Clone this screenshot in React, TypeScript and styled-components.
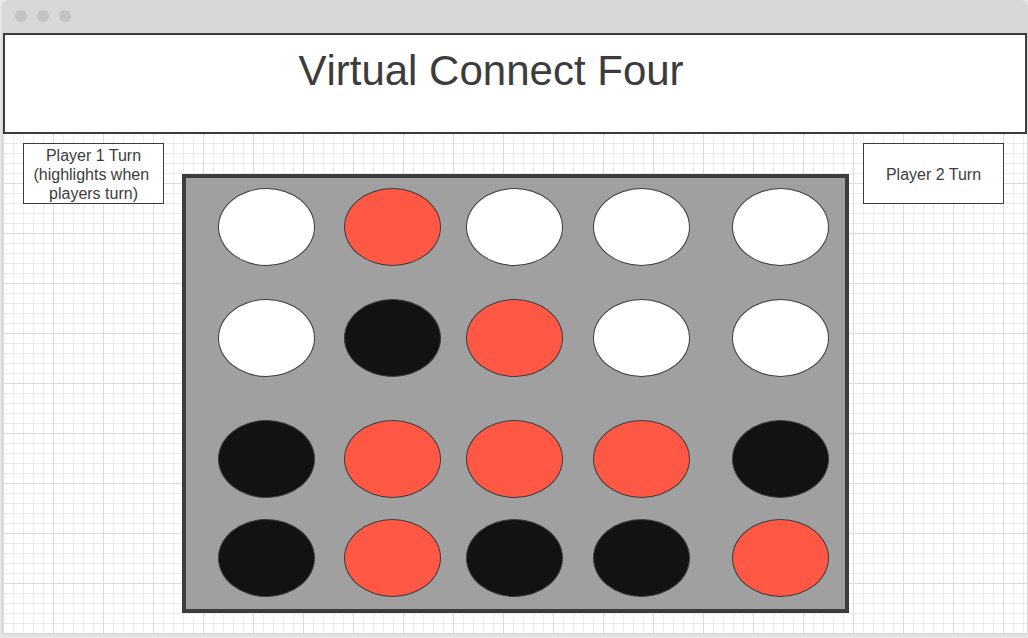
import styled, { createGlobalStyle } from "styled-components";

const GlobalStyle = createGlobalStyle`
  *, *::before, *::after { box-sizing: border-box; }
  body {
    margin: 0;
    background: #e8e8e8;
    color: #3c3c3c;
    font-family: "Liberation Sans", Arial, sans-serif;
    font-size: 16px;
    line-height: 19px;
  }
`;

const BrowserFrame = styled.div`
  margin: 0 0 4px 2px;
  border: 1px solid #d8d8d8;
  border-top: 0;
  border-radius: 8px 8px 0 0;
  background: #d8d8d8;
  box-shadow: 0 1px 4px rgba(0, 0, 0, 0.06);
`;

const ChromeBar = styled.div`
  display: flex;
  align-items: center;
  gap: 10px;
  height: 33px;
  padding: 0 12px 1px;
`;

const ChromeDot = styled.span`
  width: 12px;
  height: 12px;
  border-radius: 50%;
  background: #c4c4c4;
`;

const Page = styled.div`
  background-color: #fff;
  background-image:
    linear-gradient(to right, #dadada 1px, transparent 1px),
    linear-gradient(to bottom, #dadada 1px, transparent 1px),
    linear-gradient(to right, #ebebeb 1px, transparent 1px),
    linear-gradient(to bottom, #ebebeb 1px, transparent 1px);
  background-size: 50px 50px, 50px 50px, 10px 10px, 10px 10px;
`;

const Header = styled.header`
  height: 101px;
  padding: 12px 48px 0 0;
  border: 2px solid #3c3c3c;
  background: #fff;
  text-align: center;
`;

const Title = styled.h1`
  margin: 0;
  font-size: 42px;
  font-weight: 400;
  font-kerning: none;
  line-height: 48px;
`;

const Game = styled.main`
  display: flex;
  align-items: flex-start;
  padding: 9px 23px 20px 20px;
`;

const PlayerCard = styled.div`
  display: flex;
  flex: none;
  align-items: center;
  justify-content: center;
  width: 141px;
  height: 61px;
  padding-top: 1px;
  border: 1px solid #3c3c3c;
  background: #fff;
  text-align: center;
  white-space: pre;
`;

const Board = styled.section`
  display: grid;
  flex: 1;
  grid-template-columns: 126fr 122fr 127fr 139fr 97px;
  grid-template-rows: 111px 121px 99px 78px;
  margin: 31px 14px 0 18px;
  padding: 10px 16px 12px 32px;
  border: 4px solid #3c3c3c;
  background: #a0a0a0;
`;

type Piece = "empty" | "red" | "black";

const pieceColors: Record<Piece, string> = {
  empty: "#fff",
  red: "#ff5945",
  black: "#121212",
};

const Disc = styled.div<{ $piece: Piece }>`
  width: 97px;
  height: 78px;
  border: 1px solid #3c3c3c;
  border-radius: 50%;
  background: ${({ $piece }) => pieceColors[$piece]};
`;

const rows: Piece[][] = [
  ["empty", "red", "empty", "empty", "empty"],
  ["empty", "black", "red", "empty", "empty"],
  ["black", "red", "red", "red", "black"],
  ["black", "red", "black", "black", "red"],
];

export default function App() {
  return (
    <>
      <GlobalStyle />
      <BrowserFrame>
        <ChromeBar>
          <ChromeDot />
          <ChromeDot />
          <ChromeDot />
        </ChromeBar>
        <Page>
          <Header>
            <Title>Virtual Connect Four</Title>
          </Header>
          <Game>
            <PlayerCard>{"Player 1 Turn\n(highlights when \nplayers turn)"}</PlayerCard>
            <Board>
              {rows.map((row, r) =>
                row.map((piece, c) => <Disc key={`${r}-${c}`} $piece={piece} />)
              )}
            </Board>
            <PlayerCard>Player 2 Turn</PlayerCard>
          </Game>
        </Page>
      </BrowserFrame>
    </>
  );
}
